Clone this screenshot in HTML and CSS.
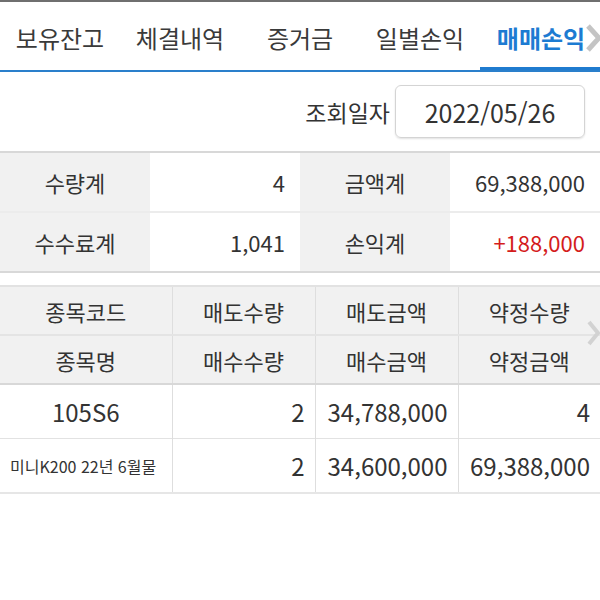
FILE: index.html
```html
<!DOCTYPE html>
<html lang="ko">
<head>
    <meta charset="UTF-8">
    <meta name="viewport" content="width=device-width, initial-scale=1.0">
    <title>매매손익</title>
    <link rel="stylesheet" href="styles.css">
</head>
<body>
    <!-- Tab bar -->
    <div class="tab-bar">
        <div class="tab">보유잔고</div>
        <div class="tab">체결내역</div>
        <div class="tab">증거금</div>
        <div class="tab">일별손익</div>
        <div class="tab active">매매손익</div>
        <div class="tab-more">
            <svg width="18" height="32" viewBox="0 0 18 32">
                <path d="M3 4 L14 16 L3 28" fill="none" stroke="#c4c4c4" stroke-width="5" stroke-linejoin="round"/>
            </svg>
        </div>
    </div>

    <!-- Date row -->
    <div class="date-row">
        <span class="date-label">조회일자</span>
        <div class="date-box">2022/05/26</div>
    </div>

    <!-- Summary -->
    <table class="summary">
        <tr>
            <th>수량계</th>
            <td>4</td>
            <th>금액계</th>
            <td>69,388,000</td>
        </tr>
        <tr>
            <th>수수료계</th>
            <td>1,041</td>
            <th>손익계</th>
            <td class="plus">+188,000</td>
        </tr>
    </table>

    <!-- Trade list -->
    <div class="grid-wrap">
        <table class="grid">
            <colgroup>
                <col class="c1">
                <col class="c2">
                <col class="c3">
                <col class="c4">
            </colgroup>
            <tr class="head">
                <th>종목코드</th>
                <th>매도수량</th>
                <th>매도금액</th>
                <th>약정수량</th>
            </tr>
            <tr class="head head-last">
                <th>종목명</th>
                <th>매수수량</th>
                <th>매수금액</th>
                <th>약정금액</th>
            </tr>
            <tr class="row">
                <td class="center">105S6</td>
                <td>2</td>
                <td>34,788,000</td>
                <td>4</td>
            </tr>
            <tr class="row row-last">
                <td class="name">미니K200 22년 6월물</td>
                <td>2</td>
                <td>34,600,000</td>
                <td>69,388,000</td>
            </tr>
        </table>
        <div class="grid-more">
            <svg width="16" height="28" viewBox="0 0 16 28">
                <path d="M3 3 L12 14 L3 25" fill="none" stroke="#d2d2d2" stroke-width="4" stroke-linejoin="round"/>
            </svg>
        </div>
    </div>
</body>
</html>
```

FILE: styles.css
```css
body {
    margin: 0;
    background: #fff;
    color: #333;
    font-family: "Noto Sans CJK KR", "Noto Sans", sans-serif;
    border-top: 2px solid #6f6f6f;
}

.tab-bar {
    position: relative;
    display: flex;
    height: 68px;
    border-bottom: 2px solid #2a7fcb;
    overflow: hidden;
}

.tab {
    flex: 0 0 120px;
    display: flex;
    align-items: center;
    justify-content: center;
    font-size: 24px;
    color: #3a3a3a;
    box-sizing: border-box;
    padding-top: 2px;
}

.tab.active {
    color: #1d7bd2;
    font-weight: bold;
    border-bottom: 3px solid #1f7bcf;
    padding-top: 5px;
    padding-left: 2px;
}

.tab-more {
    position: absolute;
    right: -3px;
    top: 20px;
}

.date-row {
    display: flex;
    justify-content: flex-end;
    align-items: center;
    height: 79px;
    padding-right: 15px;
}

.date-label {
    font-size: 23px;
    margin-right: 5px;
}

.date-box {
    width: 188px;
    height: 51px;
    border: 1px solid #d4d4d4;
    border-radius: 6px;
    box-shadow: 0 1px 2px rgba(0, 0, 0, 0.12);
    display: flex;
    align-items: center;
    justify-content: center;
    font-size: 25px;
}

.summary {
    width: 100%;
    border-collapse: collapse;
    border-top: 2px solid #d8d8d8;
    border-bottom: 2px solid #d8d8d8;
}

.summary th,
.summary td {
    width: 25%;
    height: 58px;
    padding: 0;
    font-size: 22px;
    font-weight: normal;
}

.summary tr + tr th,
.summary tr + tr td {
    border-top: 2px solid #ececec;
}

.summary th {
    background: #f1f1f1;
    text-align: center;
}

.summary td {
    text-align: right;
    padding-right: 15px;
}

.summary .plus {
    color: #d41c1c;
}

.grid-wrap {
    position: relative;
    margin-top: 12px;
}

.grid {
    width: 100%;
    border-collapse: collapse;
    table-layout: fixed;
    border-top: 2px solid #e2e2e2;
    border-bottom: 2px solid #e6e6e6;
}

.grid .c1 { width: 172px; }
.grid .c2 { width: 143px; }
.grid .c3 { width: 143px; }

.grid th,
.grid td {
    padding: 0;
    font-weight: normal;
    font-size: 22px;
    border-left: 1px solid #dedede;
}

.grid th:first-child,
.grid td:first-child {
    border-left: none;
}

.grid .head th {
    background: #f1f1f1;
    height: 47px;
    text-align: center;
}

.grid .head + .head th {
    border-top: 2px solid #e4e4e4;
}

.grid .head-last th {
    border-bottom: 2px solid #d8d8d8;
}

.grid .row td {
    height: 53px;
    text-align: right;
    padding-right: 10px;
    font-size: 24px;
}

.grid .row-last td {
    border-top: 1px solid #e2e2e2;
}

.grid td.center {
    text-align: center;
    padding-right: 0;
}

.grid td.name {
    text-align: left;
    padding-left: 10px;
    padding-right: 0;
    font-size: 16px;
}

.grid-more {
    position: absolute;
    right: -2px;
    top: 34px;
}
```
